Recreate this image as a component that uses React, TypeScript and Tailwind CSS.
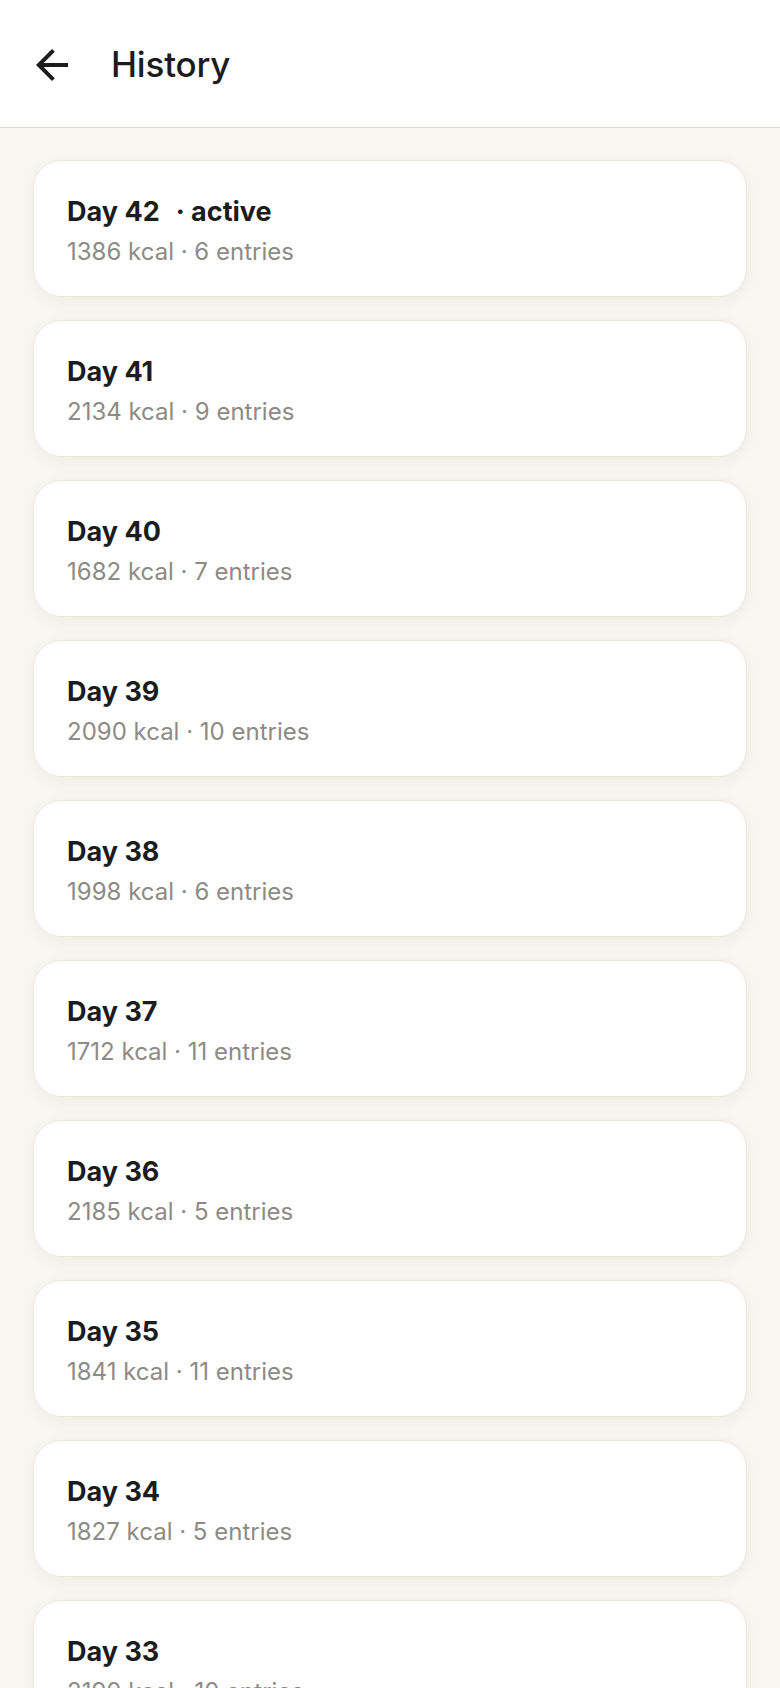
import React from "react";

const days = [
  { day: 42, kcal: 1386, entries: 6, active: true },
  { day: 41, kcal: 2134, entries: 9 },
  { day: 40, kcal: 1682, entries: 7 },
  { day: 39, kcal: 2090, entries: 10 },
  { day: 38, kcal: 1998, entries: 6 },
  { day: 37, kcal: 1712, entries: 11 },
  { day: 36, kcal: 2185, entries: 5 },
  { day: 35, kcal: 1841, entries: 11 },
  { day: 34, kcal: 1827, entries: 5 },
  { day: 33, kcal: 2190, entries: 10 },
  { day: 32, kcal: 1904, entries: 8 },
];

function ArrowBack() {
  return (
    <svg width="48" height="48" viewBox="0 0 24 24" fill="#1c1c1c" aria-hidden="true">
      <path d="M20 11H7.83l5.59-5.59L12 4l-8 8 8 8 1.41-1.41L7.83 13H20v-2z" />
    </svg>
  );
}

export default function App() {
  return (
    <div
      className="min-h-screen bg-[#f9f7f2] text-[#1c1c1c]"
      style={{ fontFamily: "Inter, 'Noto Sans', sans-serif" }}
    >
      <header className="flex h-[128px] items-center gap-[35px] border-b border-[#dcd9d3] bg-white px-[28px] pt-[2px]">
        <ArrowBack />
        <h1 className="text-[35px] font-medium leading-none tracking-[-0.2px]">History</h1>
      </header>
      <main className="flex flex-col gap-[23px] px-[33px] pt-[32px] pb-[40px]">
        {days.map((d) => (
          <div
            key={d.day}
            className="rounded-[28px] border border-[#ece6da] bg-white px-[33px] pt-[33px] pb-[31px] shadow-[0_4px_18px_rgba(120,100,60,0.08)]"
          >
            <div className="text-[27px] font-bold leading-[36px]">
              Day {d.day}
              {d.active && <span className="ml-[16px]">· active</span>}
            </div>
            <div className="mt-[9px] text-[24px] leading-[26px] text-[#8e8a84]">
              {d.kcal} kcal · {d.entries} entries
            </div>
          </div>
        ))}
      </main>
    </div>
  );
}
